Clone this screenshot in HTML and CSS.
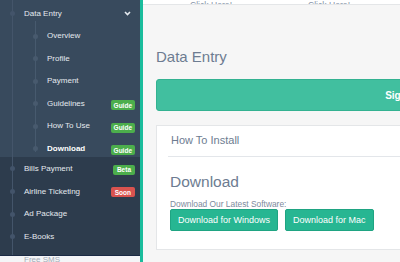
FILE: index.html
```html
<!DOCTYPE html>
<html lang="en">

<head>
    <meta charset="UTF-8">
    <meta name="viewport" content="width=device-width, initial-scale=1.0">
    <title>Data Entry</title>
    <link rel="stylesheet" href="styles.css">
</head>

<body>
    <div class="page">

        <!-- ----------- sidebar ---------------- -->

        <aside class="sidebar">
            <nav class="nav">
                <div class="open-group">
                    <div class="item top">
                        <span class="label">Data Entry</span>
                        <svg class="chev" width="7" height="5" viewBox="0 0 7 5">
                            <path d="M1 1 L3.5 3.5 L6 1" fill="none" stroke="#e6ebf0" stroke-width="1.6" />
                        </svg>
                    </div>
                    <ul class="submenu">
                        <li class="item sub"><span class="label">Overview</span></li>
                        <li class="item sub"><span class="label">Profile</span></li>
                        <li class="item sub"><span class="label">Payment</span></li>
                        <li class="item sub"><span class="label">Guidelines</span><span class="badge green">Guide</span></li>
                        <li class="item sub"><span class="label">How To Use</span><span class="badge green">Guide</span></li>
                        <li class="item sub active"><span class="label">Download</span><span class="badge green">Guide</span></li>
                    </ul>
                </div>
                <ul class="menu">
                    <li class="item top"><span class="label">Bills Payment</span><span class="badge green beta">Beta</span></li>
                    <li class="item top"><span class="label">Airline Ticketing</span><span class="badge red">Soon</span></li>
                    <li class="item top"><span class="label">Ad Package</span></li>
                    <li class="item top"><span class="label">E-Books</span></li>
                    <li class="item top last"><span class="label">Free SMS</span></li>
                </ul>
            </nav>
        </aside>

        <!-- ----------- content ---------------- -->

        <main class="content">
            <div class="topbar">
                <span class="toplink">Click Here!</span>
                <span class="toplink">Click Here!</span>
            </div>

            <h1 class="title">Data Entry</h1>

            <div class="signup">Sign Up Now</div>

            <div class="card">
                <div class="card-head">How To Install</div>
                <div class="card-body">
                    <h2>Download</h2>
                    <p>Download Our Latest Software:</p>
                    <div class="buttons">
                        <button class="btn">Download for Windows</button>
                        <button class="btn">Download for Mac</button>
                    </div>
                </div>
            </div>
        </main>

    </div>
</body>

</html>
```

FILE: styles.css
```css
* {
    box-sizing: border-box;
    padding: 0;
    margin: 0;
}

body {
    width: 400px;
    height: 262px;
    overflow: hidden;
    font-family: "Liberation Sans", Arial, sans-serif;
    background: #f6f6f6;
}

.page {
    display: flex;
    height: 262px;
    width: 700px;
}

/* ----------- sidebar ---------------- */

.sidebar {
    flex: 0 0 143px;
    background: #f4f5f7;
    border-right: 3px solid #1abc9c;
}

.nav {
    position: relative;
    height: 256px;
    background: #2d3c4d;
    border-bottom: 1px solid #1b2a44;
}

.nav::before {
    content: "";
    position: absolute;
    left: 12px;
    top: 0;
    bottom: 0;
    width: 1px;
    background: #44556a;
}

.open-group {
    height: 157px;
    background: #384a5d;
    padding-top: 2px;
}

.sidebar ul {
    list-style: none;
}

.submenu {
    position: relative;
}

.submenu::before {
    content: "";
    position: absolute;
    left: 35px;
    top: -4px;
    bottom: 8px;
    width: 1px;
    background: #475a6e;
}

.item {
    position: relative;
    display: flex;
    align-items: center;
    height: 22.5px;
    padding-right: 5px;
    font-size: 8px;
    color: #e4e9ee;
}

.item::before {
    content: "";
    position: absolute;
    top: 50%;
    width: 5px;
    height: 5px;
    margin-top: -2px;
    border-radius: 50%;
    background: #43546a;
}

.menu .item {
    height: 22.7px;
}

.top {
    padding-left: 24px;
}

.top::before {
    left: 10px;
}

.last {
    color: #a3abb6;
}

.last::before {
    display: none;
}

.sub {
    padding-left: 47px;
}

.sub::before {
    left: 33px;
    background: #485a6e;
}

.active .label {
    color: #ffffff;
    font-weight: bold;
}

.chev {
    margin-left: auto;
    margin-right: 4px;
}

.badge {
    margin-left: auto;
    margin-top: 4px;
    padding: 1.5px 3px;
    border-radius: 2px;
    font-size: 6.5px;
    font-weight: bold;
    line-height: 7px;
    color: #ffffff;
}

.green {
    background: #4cae4c;
}

.beta {
    padding: 1.5px 4px;
    margin-top: 3px;
}

.red {
    background: #d9534f;
    padding: 1.5px 4px;
    margin-top: 2px;
}

/* ----------- content ---------------- */

.content {
    flex: 0 0 auto;
    width: 546px;
    padding: 0 13px;
}

.topbar {
    display: flex;
    align-items: flex-end;
    height: 5px;
    margin: 0 -13px;
    padding-left: 47px;
    background: #ffffff;
    border-bottom: 1px solid #e4e6e8;
    overflow: hidden;
}

.toplink {
    font-size: 8.6px;
    line-height: 8px;
    margin-bottom: -5px;
    color: #8593a6;
    width: 118px;
}

.title {
    margin-top: 43px;
    font-size: 15px;
    font-weight: normal;
    line-height: 18px;
    color: #6d7c91;
}

.signup {
    margin-top: 13px;
    height: 32px;
    background: #41bf9f;
    border: 1px solid #33b291;
    border-radius: 3px;
    display: flex;
    align-items: center;
    justify-content: center;
    font-size: 10px;
    font-weight: bold;
    color: #ffffff;
}

.card {
    margin-top: 14px;
    background: #ffffff;
    border: 1px solid #e4e6e8;
    height: 125px;
}

.card-head {
    margin: 0 11px;
    padding: 8px 3px 0;
    height: 31px;
    border-bottom: 1px solid #e3e6ea;
    font-size: 11px;
    color: #6d7c91;
}

.card-body {
    padding: 16px 13px 0;
}

.card-body h2 {
    font-size: 15.5px;
    font-weight: normal;
    line-height: 18px;
    color: #6d7c91;
}

.card-body p {
    margin-top: 8px;
    font-size: 8.4px;
    line-height: 10px;
    color: #7d8a9c;
}

.buttons {
    display: flex;
    gap: 7px;
}

.btn {
    height: 22px;
    padding: 0 7px;
    font-family: "Liberation Sans", Arial, sans-serif;
    font-size: 9px;
    color: #ffffff;
    background: #27b692;
    border: 1px solid #1fa482;
    border-radius: 2px;
}
```
